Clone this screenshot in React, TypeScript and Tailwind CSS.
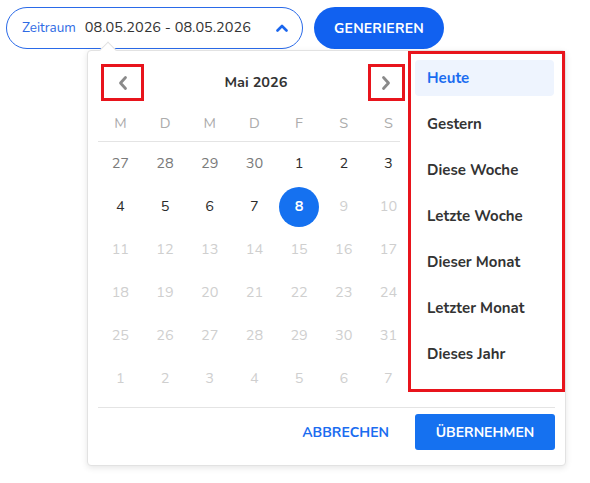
import React from "react";

const font = { fontFamily: "Nunito, Lato, 'Noto Sans', sans-serif" };

type Day = { n: number; tone: "prev" | "cur" | "off" | "sel" };

const weeks: Day[][] = [
  [
    { n: 27, tone: "prev" },
    { n: 28, tone: "prev" },
    { n: 29, tone: "prev" },
    { n: 30, tone: "prev" },
    { n: 1, tone: "cur" },
    { n: 2, tone: "cur" },
    { n: 3, tone: "cur" },
  ],
  [
    { n: 4, tone: "cur" },
    { n: 5, tone: "cur" },
    { n: 6, tone: "cur" },
    { n: 7, tone: "cur" },
    { n: 8, tone: "sel" },
    { n: 9, tone: "off" },
    { n: 10, tone: "off" },
  ],
  [11, 12, 13, 14, 15, 16, 17].map((n) => ({ n, tone: "off" as const })),
  [18, 19, 20, 21, 22, 23, 24].map((n) => ({ n, tone: "off" as const })),
  [25, 26, 27, 28, 29, 30, 31].map((n) => ({ n, tone: "off" as const })),
  [1, 2, 3, 4, 5, 6, 7].map((n) => ({ n, tone: "off" as const })),
];

const presets = [
  "Heute",
  "Gestern",
  "Diese Woche",
  "Letzte Woche",
  "Dieser Monat",
  "Letzter Monat",
  "Dieses Jahr",
];

function Chevron({ dir }: { dir: "left" | "right" | "up" }) {
  if (dir === "up") {
    return (
      <svg width="12" height="8" viewBox="0 0 12 8" fill="none">
        <path d="M1.5 6.5 L6 2 L10.5 6.5" stroke="#1a66ee" strokeWidth="2.6" strokeLinecap="round" strokeLinejoin="round" />
      </svg>
    );
  }
  return (
    <svg width="12" height="16" viewBox="0 0 12 16" fill="none">
      <path
        d={dir === "left" ? "M8.5 2.5 L3.5 8 L8.5 13.5" : "M3.5 2.5 L8.5 8 L3.5 13.5"}
        stroke="#8a8a8a"
        strokeWidth="2.8"
        strokeLinecap="round"
        strokeLinejoin="round"
      />
    </svg>
  );
}

function DayCell({ d }: { d: Day }) {
  if (d.tone === "sel") {
    return (
      <div className="flex h-[43px] items-center justify-center">
        <div className="flex h-[40px] w-[40px] items-center justify-center rounded-full bg-[#1571f0] text-[14.5px] font-bold text-white">
          {d.n}
        </div>
      </div>
    );
  }
  const color =
    d.tone === "cur" ? "text-[#2b2b2b]" : d.tone === "prev" ? "text-[#7a7a7a]" : "text-[#cfcfcf]";
  return <div className={`flex h-[43px] items-center justify-center text-[14.5px] ${color}`}>{d.n}</div>;
}

export default function App() {
  return (
    <div className="relative h-[483px] w-[590px] overflow-hidden bg-white" style={font}>
      {/* toolbar */}
      <div className="flex items-center gap-[11px] pl-[6px] pt-[7px]">
        <div className="flex h-[42px] w-[297px] items-center rounded-full border border-[#2a6ae8] bg-white pl-[15px] pr-[14px]">
          <span className="text-[13.5px] text-[#2f6be4]">Zeitraum</span>
          <span className="ml-[9px] text-[14.5px] text-[#333333]">08.05.2026 - 08.05.2026</span>
          <span className="ml-auto flex items-center">
            <Chevron dir="up" />
          </span>
        </div>
        <button className="flex h-[42px] w-[130px] items-center justify-center rounded-full bg-[#1161f0] text-[14px] font-bold tracking-[0.2px] text-white">
          GENERIEREN
        </button>
      </div>

      {/* date range popover */}
      <div className="absolute left-[87px] top-[50px] w-[479px] rounded-[4px] border border-[#e2e2e2] bg-white shadow-[0_2px_6px_rgba(0,0,0,0.10)]">
        <div className="absolute left-[14px] top-[-7px] h-[12px] w-[12px] rotate-45 border-l border-t border-[#e2e2e2] bg-white" />

        <div className="relative flex items-start">
          {/* calendar */}
          <div className="w-[320px] pl-[10px] pt-[13px]">
            <div className="flex items-center justify-between px-[3px]">
              <button className="flex h-[37px] w-[43px] items-center justify-center border-[3px] border-[#e8141c]">
                <Chevron dir="left" />
              </button>
              <div className="text-[14.5px] font-bold text-[#333333]">Mai 2026</div>
              <button className="flex h-[37px] w-[37px] items-center justify-center border-[3px] border-[#e8141c]">
                <Chevron dir="right" />
              </button>
            </div>
            <div className="grid h-[40px] grid-cols-[repeat(7,44.7px)] items-center pt-[6px] text-[14.5px] text-[#acacac]">
              {["M", "D", "M", "D", "F", "S", "S"].map((w, i) => (
                <div key={i} className="text-center">
                  {w}
                </div>
              ))}
            </div>
            <div className="h-px w-[302px] bg-[#e4e4e4]" />
            <div>
              {weeks.map((wk, i) => (
                <div key={i} className="grid grid-cols-[repeat(7,44.7px)]">
                  {wk.map((d, j) => (
                    <DayCell key={j} d={d} />
                  ))}
                </div>
              ))}
            </div>
          </div>

          {/* quick ranges */}
          <div className="relative z-10 flex h-[341px] w-[159px] flex-col gap-[10px] border-[3px] border-[#e8141c] bg-white pl-[4px] pr-[8px] pt-[6px]">
            {presets.map((p, i) => (
              <div
                key={p}
                className={`flex h-[36px] items-center rounded-[4px] pl-[12px] text-[15px] font-bold ${
                  i === 0 ? "bg-[#eef4fe] text-[#1a6cf0]" : "text-[#333333]"
                }`}
              >
                {p}
              </div>
            ))}
          </div>
        </div>

        <div className="mx-[10px] mt-[7px] h-px bg-[#e4e4e4]" />
        <div className="flex items-center justify-end gap-[26px] pb-[15px] pr-[10px] pt-[6px]">
          <button className="text-[14px] font-bold text-[#1a6cf0]">ABBRECHEN</button>
          <button className="flex h-[36px] w-[140px] items-center justify-center rounded-[3px] bg-[#1571f0] text-[14px] font-bold text-white">
            ÜBERNEHMEN
          </button>
        </div>
      </div>
    </div>
  );
}
